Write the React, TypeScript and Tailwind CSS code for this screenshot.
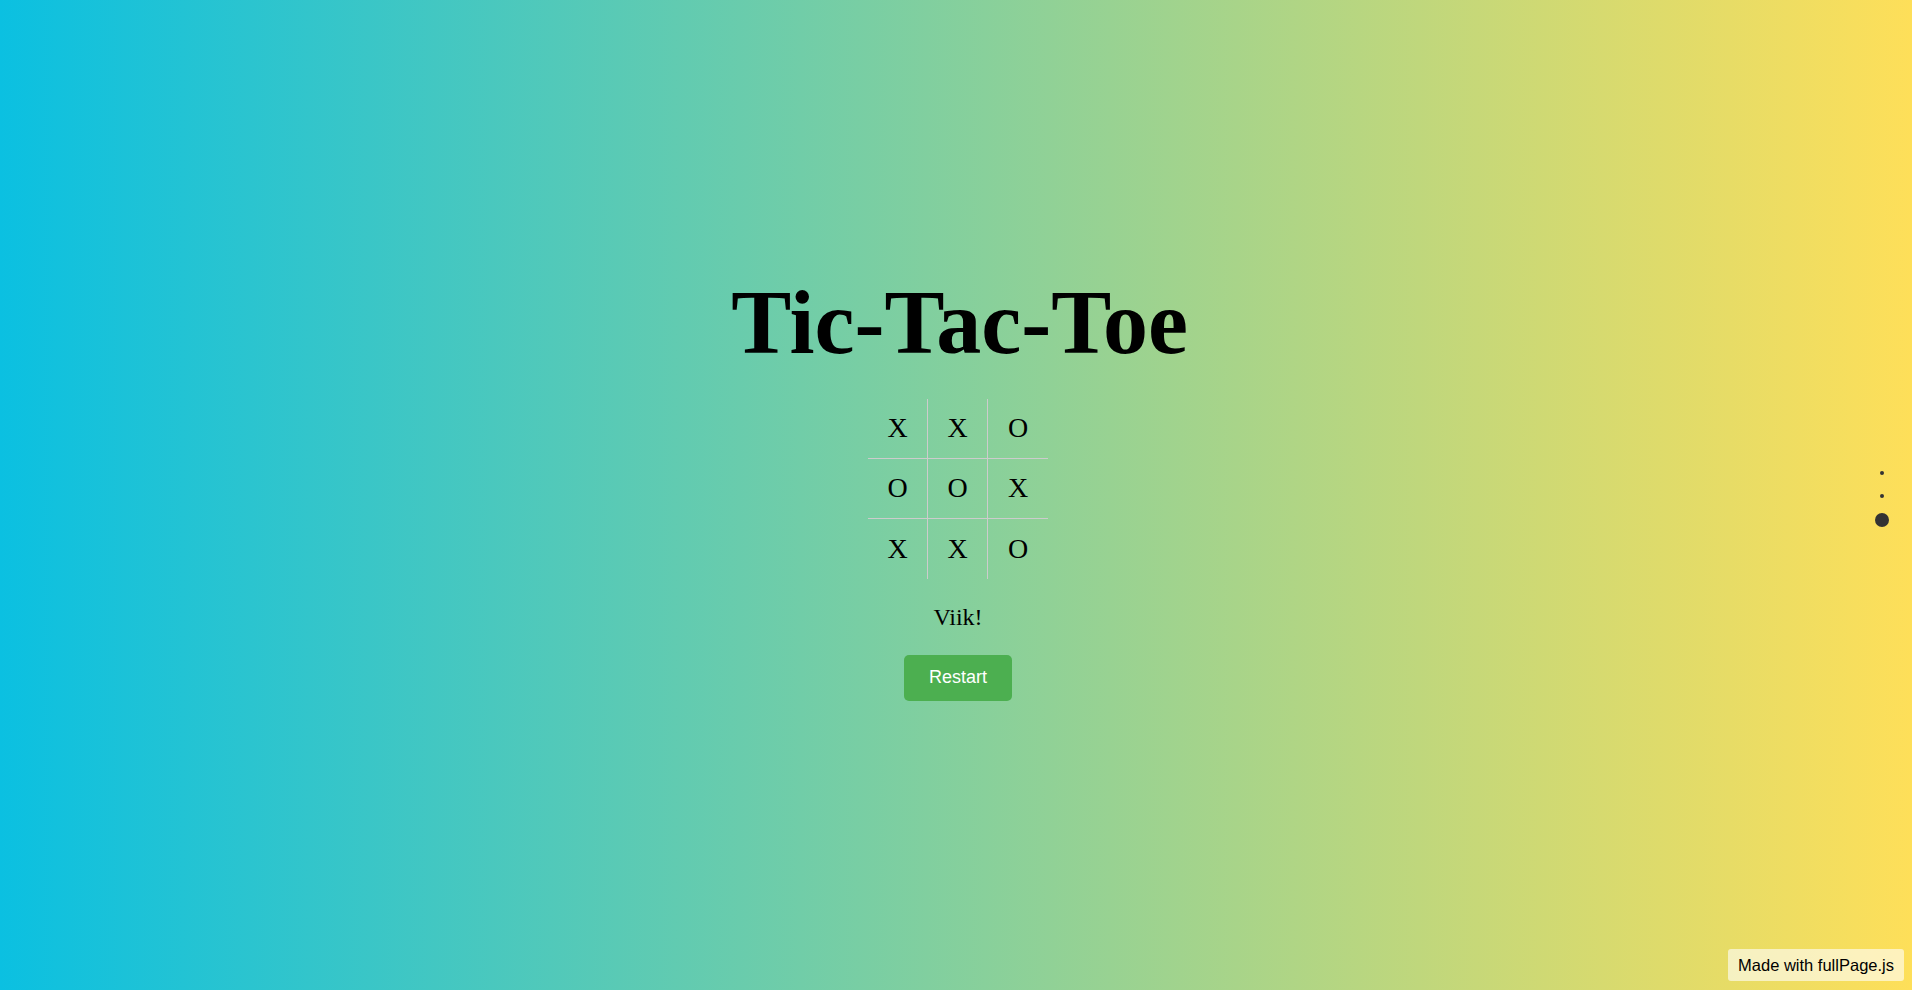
import { useState } from 'react';

const initial = ['X', 'X', 'O', 'O', 'O', 'X', 'X', 'X', 'O'];

export default function App() {
  const [board, setBoard] = useState<string[]>(initial);
  const [status, setStatus] = useState('Viik!');

  const restart = () => {
    setBoard(Array(9).fill(''));
    setStatus('');
  };

  return (
    <div className="relative w-full h-[990px] overflow-hidden bg-[linear-gradient(to_right,#0bc0e1,#fedf59)]">
      <main className="h-full flex flex-col items-center justify-center pb-[11px] pl-[4px] font-['Liberation_Serif',serif] text-black">
        <h1 className="pl-[3px] text-[90px] leading-[88px] font-bold">Tic-Tac-Toe</h1>

        {/* board */}
        <div className="mt-[32px] grid grid-cols-3">
          {board.map((cell, i) => (
            <div
              key={i}
              className={`w-[60px] h-[60px] flex items-center justify-center text-[28px] border-[#cccccc] ${
                i % 3 !== 2 ? 'border-r' : ''
              } ${i < 6 ? 'border-b' : ''}`}
            >
              {cell}
            </div>
          ))}
        </div>

        <p className="mt-[26px] text-[24px] leading-[24px] h-[24px]">{status}</p>

        <button
          onClick={restart}
          className="mt-[26px] h-[46px] px-[25px] rounded-[5px] bg-[#4caf50] text-white text-[18px] font-['Liberation_Sans',Arial,sans-serif]"
        >
          Restart
        </button>
      </main>

      {/* section nav */}
      <ul className="absolute right-[23px] top-[461px] flex flex-col items-center">
        <li className="h-[23px] w-[14px] flex items-center justify-center">
          <span className="block w-[4px] h-[4px] rounded-full bg-[#333333]" />
        </li>
        <li className="h-[23px] w-[14px] flex items-center justify-center">
          <span className="block w-[4px] h-[4px] rounded-full bg-[#333333]" />
        </li>
        <li className="h-[25px] w-[14px] flex items-center justify-center">
          <span className="block w-[14px] h-[14px] rounded-full bg-[#333333]" />
        </li>
      </ul>

      <div className="absolute right-[8px] bottom-[9px] h-[32px] px-[10px] flex items-center rounded-[3px] bg-white/60 text-black text-[16.5px] font-['Liberation_Sans',Arial,sans-serif]">
        Made with fullPage.js
      </div>
    </div>
  );
}
